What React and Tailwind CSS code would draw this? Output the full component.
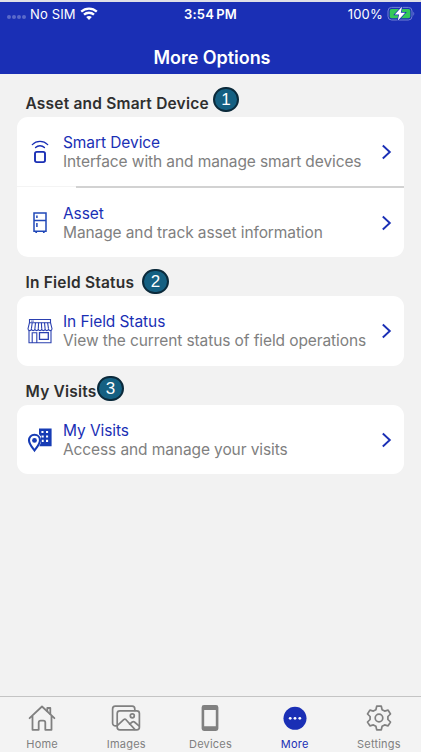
import React from 'react';

const SmartDeviceIcon = () => (
  <svg width="20" height="26" viewBox="0 0 20 26" fill="none" stroke="#1a2fb5" strokeLinecap="round">
    <path d="M2.3 5.6C6.6 1.4 13.4 1.4 17.7 5.6" strokeWidth="1.3" />
    <path d="M5.6 8.5C8 6.2 12 6.2 14.4 8.5" strokeWidth="1.5" />
    <rect x="5" y="12.9" width="10" height="10.2" rx="1.8" strokeWidth="1.9" />
  </svg>
);

const AssetIcon = () => (
  <svg width="16" height="24" viewBox="0 0 16 24" fill="none" stroke="#2148b8" strokeWidth="1.5">
    <path d="M2 1.9h12v18.3H2zM2 9.5h12" />
    <path d="M4.9 4.5v2.6M4.9 12v4" strokeWidth="1.5" />
    <path d="M4.2 20.4v1.7M11.8 20.4v1.7" strokeWidth="1.7" />
  </svg>
);

const StoreIcon = () => (
  <svg width="26" height="26" viewBox="0 0 26 26" fill="none" stroke="#2b40b0" strokeWidth="1.1">
    <path d="M2.5 1.5h21v3.2h-21z" />
    <path d="M4 3.1h3" strokeWidth="0.8" />
    <path d="M2.5 4.7L1 10.7c0 2.5 3.4 2.5 3.4 0 0 2.5 3.5 2.5 3.5 0 0 2.5 3.4 2.5 3.4 0 0 2.5 3.4 2.5 3.4 0 0 2.5 3.4 2.5 3.4 0 0 2.5 3.4 2.5 3.4 0 0 2.5 3.5 2.5 3.5 0L23.5 4.7" />
    <path d="M5.2 4.7l-.8 6M8.5 4.7l-.6 6M11.6 4.7l-.3 6M14.4 4.7l.3 6M17.5 4.7l.6 6M20.6 4.7l.9 6" />
    <path d="M2 12.5v12.2h22V12.5M5.2 24.5v-9.8h4.6v9.8" />
    <path d="M12.5 14.7h8.8v6.6h-8.8z" strokeWidth="1.3" />
  </svg>
);

const VisitsIcon = () => (
  <svg width="26" height="26" viewBox="0 0 26 26" fill="#173cb5">
    <path
      fillRule="evenodd"
      d="M12 1.4h12.6v17.8H12.2l1.8-3.4V9.6L12 7.2zM14.4 4v2.1h2.1V4zm4.6 0v2.1h2.1V4zM14.6 8.4v2.1h2.1V8.4zm4.4 0v2.1h2.1V8.4zm0 4.4v2.1h2.1v-2.1zm-4.2 0v2.1h1.9v-2.1z"
    />
    <path
      d="M7.5 7.8c-3.3 0-5.5 2.4-5.5 5.4 0 3.6 2.9 6.8 5.5 10.2 2.6-3.4 5.5-6.6 5.5-10.2 0-3-2.2-5.4-5.5-5.4z"
      fill="#fff"
      stroke="#173cb5"
      strokeWidth="2.1"
    />
    <circle cx="7.5" cy="13.4" r="2.4" />
  </svg>
);

const HomeIcon = () => (
  <svg width="28" height="28" viewBox="0 0 28 28" fill="none" stroke="#808080" strokeWidth="1.8" strokeLinejoin="round" strokeLinecap="round">
    <path d="M1.6 14.2L14 2.5l12.4 11.7M4.5 11.8v14h6.2v-7.2c0-1.4.7-2 2-2h2.6c1.3 0 2 .6 2 2v7.2h6.2v-14" />
    <path d="M19.3 7V4h3v6" />
  </svg>
);

const ImagesIcon = () => (
  <svg width="30" height="28" viewBox="0 0 30 28" fill="none" stroke="#808080" strokeWidth="1.7" strokeLinejoin="round" strokeLinecap="round">
    <path d="M5.4 21.8H4.4c-1.5 0-2.8-1.1-2.8-2.6V5c0-1.5 1.1-2.8 2.6-2.8h17c1.5 0 2.6 1.1 2.6 2.8v1.5" />
    <rect x="6.2" y="6.8" width="22.2" height="19" rx="2.6" />
    <circle cx="21.3" cy="11.8" r="2" />
    <path d="M6.5 21.4l6.2-5.7c.8-.7 1.6-.7 2.3 0l8.8 9.7M18.6 20.2l2.7-2.2c.8-.6 1.4-.6 2.1 0l4.6 3.9" />
  </svg>
);

const DevicesIcon = () => (
  <svg width="18" height="28" viewBox="0 0 18 28">
    <path fill="#808080" fillRule="evenodd" d="M3 1h12a2.4 2.4 0 0 1 2.4 2.4v21.2A2.4 2.4 0 0 1 15 27H3a2.4 2.4 0 0 1-2.4-2.4V3.4A2.4 2.4 0 0 1 3 1zm.2 5v16.2h11.6V6z" />
  </svg>
);

const MoreIcon = () => (
  <svg width="24" height="28" viewBox="0 0 24 28">
    <circle cx="12" cy="14.3" r="11.5" fill="#1a2fb5" />
    <circle cx="7.2" cy="14.3" r="1.4" fill="#fff" />
    <circle cx="12" cy="14.3" r="1.4" fill="#fff" />
    <circle cx="16.8" cy="14.3" r="1.4" fill="#fff" />
  </svg>
);

const SettingsIcon = () => (
  <svg width="28" height="28" viewBox="0 0 28 28" fill="none" stroke="#808080" strokeWidth="1.7" strokeLinejoin="round">
    <path d="M11.7 2.2h4.6l.8 3.5 2.5 1.4 3.5-1 2.4 3.9-2.6 2.5v3l2.6 2.5-2.4 3.9-3.5-1-2.5 1.4-.8 3.5h-4.6l-.8-3.5-2.5-1.4-3.5 1L2.5 18l2.6-2.5v-3L2.5 10l2.4-3.9 3.5 1 2.5-1.4z" />
    <circle cx="14" cy="14" r="3.8" />
  </svg>
);

const Chevron = () => (
  <svg width="11" height="16" viewBox="0 0 11 16" fill="none" stroke="#1a2fb5" strokeWidth="1.9">
    <path d="M1.8 1.5L8.8 8l-7 6.5" />
  </svg>
);

const sections = [
  {
    title: 'Asset and Smart Device',
    step: 1,
    heading: 'h-[43px] pt-5',
    badge: 'left-[213px] top-[13px] w-[26px]',
    rows: [
      { title: 'Smart Device', text: 'Interface with and manage smart devices', icon: SmartDeviceIcon, height: 'h-[70px]' },
      { title: 'Asset', text: 'Manage and track asset information', icon: AssetIcon, height: 'h-[69px]' },
    ],
  },
  {
    title: 'In Field Status',
    step: 2,
    heading: 'h-[39px] pt-4',
    badge: 'left-[142px] top-3 w-[27px]',
    rows: [{ title: 'In Field Status', text: 'View the current status of field operations', icon: StoreIcon, height: 'h-[70px]' }],
  },
  {
    title: 'My Visits',
    step: 3,
    heading: 'h-[39px] pt-4',
    badge: 'left-[97px] top-[10px] w-[27px]',
    rows: [{ title: 'My Visits', text: 'Access and manage your visits', icon: VisitsIcon, height: 'h-[69px]' }],
  },
];

const tabs = [
  { label: 'Home', icon: HomeIcon },
  { label: 'Images', icon: ImagesIcon },
  { label: 'Devices', icon: DevicesIcon },
  { label: 'More', icon: MoreIcon, active: true },
  { label: 'Settings', icon: SettingsIcon },
];

const StatusBar = () => (
  <div className="grid h-[24px] grid-cols-3 items-center text-[13px] leading-none">
    <div className="flex items-center pl-[7px]">
      <div className="mt-[5px] flex gap-[1px]">
        {[1, 2, 3, 4].map((dot) => (
          <span key={dot} className="size-1 rounded-full bg-[#5a69ca]" />
        ))}
      </div>
      <span className="ml-[4px] w-[47px] whitespace-nowrap tracking-[0.15px]">No SIM</span>
      <svg className="ml-[3px]" width="18" height="14" viewBox="0 0 18 14" fill="none" stroke="#fff" strokeWidth="2.3">
        <path d="M1.2 4.6C5.6.5 12.4.5 16.8 4.6M4 7.7c2.8-2.6 7.2-2.6 10 0" />
        <path d="M6.2 10.1c1.6-1.5 4-1.5 5.6 0L9 13z" fill="#fff" stroke="none" />
      </svg>
    </div>
    <span className="text-center font-semibold tracking-[0.25px] [word-spacing:-1.5px]">3:54 PM</span>
    <div className="flex items-center justify-end pr-[6px]">
      <span className="tracking-[0.2px]">100%</span>
      <svg className="ml-[4px]" width="28" height="16" viewBox="0 0 28 16">
        <rect x="1" y="1.4" width="24" height="12.6" rx="3.6" fill="none" stroke="#7180d4" strokeWidth="1" />
        <path d="M26.4 5.7v4c1.1-.5 1.1-3.5 0-4z" fill="#7180d4" />
        <rect x="2.7" y="3.1" width="20.6" height="9.2" rx="2" fill="#34c759" />
        <path d="M15 .7L7.8 8.6h4.3L10.7 14.7 18.2 6.7h-4.4z" fill="#fff" stroke="#1a2fb5" strokeWidth="1.4" paintOrder="stroke" />
      </svg>
    </div>
  </div>
);

const Row = ({ title, text, icon: Icon, height }) => (
  <div className={`flex items-center ${height}`}>
    <div className="flex w-[46px] shrink-0 justify-center">
      <Icon />
    </div>
    <div className="flex-1 whitespace-nowrap leading-[19px]">
      <div className="text-[15.5px] tracking-[-0.08px] text-[#1a2fb5]">{title}</div>
      <div className="text-[15.5px] tracking-[-0.1px] text-[#808080]">{text}</div>
    </div>
    <div className="mr-3">
      <Chevron />
    </div>
  </div>
);

export default function App() {
  return (
    <div className="flex h-[752px] w-[421px] flex-col overflow-hidden bg-[#f2f2f2] font-['Inter',sans-serif]">
      <header className="h-[74px] shrink-0 border-t-2 border-[#e0e0e6] bg-[#1a2fb5] text-white">
        <StatusBar />
        <h1 className="mt-[20px] pl-[3px] text-center text-[18px] leading-[24px] font-semibold tracking-[-0.05px]">More Options</h1>
      </header>

      <main className="flex-1">
        {sections.map((section) => (
          <section key={section.title}>
            <div className={`relative pl-[25.5px] ${section.heading}`}>
              <h2 className="text-[15.5px] leading-[20px] font-semibold tracking-[0.2px] text-[#2f2f2f]">{section.title}</h2>
              <span className={`absolute flex h-[25px] items-center justify-center rounded-full border-2 border-[#0b2a3b] bg-[#156082] font-['Liberation_Sans',sans-serif] text-[17px] leading-none text-white ${section.badge}`}>
                {section.step}
              </span>
            </div>
            <div className="mr-[17px] ml-[17px] rounded-[11px] bg-white">
              {section.rows.map((row, index) => (
                <React.Fragment key={row.title}>
                  {index > 0 && (
                    <div className="-mt-px flex h-[2px]">
                      <div className="h-px w-[59px] bg-[#f4f4f4]" />
                      <div className="h-[2px] flex-1 bg-[#d2d2d2]" />
                    </div>
                  )}
                  <Row {...row} />
                </React.Fragment>
              ))}
            </div>
          </section>
        ))}
      </main>

      {/* Bottom tab bar */}
      <nav className="grid h-14 shrink-0 grid-cols-5 border-t border-[#c4c4c4] bg-[#f3f3f3]">
        {tabs.map(({ label, icon: Icon, active }) => (
          <div key={label} className="flex flex-col items-center pt-[7px]">
            <Icon />
            <span className={`mt-[5px] text-[11px] leading-[14px] tracking-[0.2px] ${active ? 'text-[#1a2fb5]' : 'text-[#808080]'}`}>{label}</span>
          </div>
        ))}
      </nav>
    </div>
  );
}
